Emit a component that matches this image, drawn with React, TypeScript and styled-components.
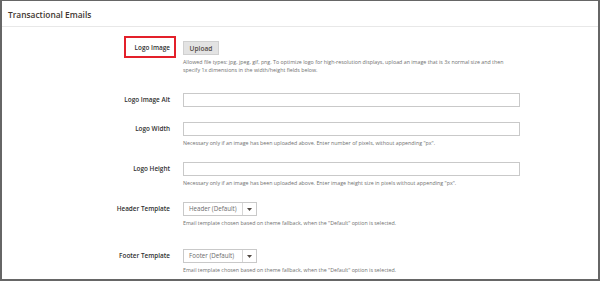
import React from "react";
import styled, { createGlobalStyle } from "styled-components";

const Global = createGlobalStyle`
  html, body { margin: 0; padding: 0; background: #ffffff; }
  body { font-family: "Open Sans", "Liberation Sans", sans-serif; }
  * { box-sizing: border-box; }
`;

const Frame = styled.div`
  width: 600px;
  height: 281px;
  border: 2px solid #666666;
  border-top-width: 1px;
  background: #ffffff;
  overflow: hidden;
`;

const Heading = styled.div`
  height: 26px;
  padding: 8px 0 0 6px;
  font-size: 8.4px;
  font-weight: 600;
  color: #41362f;
  border-bottom: 1px solid #e8e8e8;
`;

const Form = styled.div`
  display: flex;
  flex-direction: column;
  padding-top: 14px;
`;

const Row = styled.div<{ $mt: number }>`
  display: grid;
  grid-template-columns: 168px 337px;
  column-gap: 13px;
  margin-top: ${(p) => p.$mt}px;
`;

const LabelCell = styled.div`
  display: flex;
  justify-content: flex-end;
  align-items: flex-start;
  height: 14px;
`;

const Label = styled.div<{ $boxed?: boolean }>`
  font-size: 6.4px;
  font-weight: 600;
  color: #303030;
  line-height: 14px;
  white-space: nowrap;
  ${(p) =>
    p.$boxed
      ? `border: 2px solid #e3202a; margin: -5px -6px -3px 0; padding: 3px 4px 1px 9px;`
      : ``}
`;

const Control = styled.div`
  display: flex;
  flex-direction: column;
`;

const Button = styled.div`
  width: 36px;
  height: 14px;
  background: #e3e3e3;
  border: 1px solid #d0d0d0;
  color: #514943;
  font-size: 6.6px;
  font-weight: 600;
  display: flex;
  align-items: center;
  justify-content: center;
`;

const Input = styled.div`
  width: 337px;
  height: 14px;
  border: 1px solid #c9c9c9;
  background: #ffffff;
`;

const Select = styled.div`
  width: 74px;
  height: 14px;
  border: 1px solid #c9c9c9;
  display: flex;
  background: #ffffff;
`;

const SelectText = styled.div`
  flex: 1;
  font-size: 6.2px;
  color: #6a6a6a;
  line-height: 12px;
  padding-left: 5px;
  white-space: nowrap;
`;

const SelectArrow = styled.div`
  width: 14px;
  border-left: 1px solid #d6d6d6;
  display: flex;
  align-items: center;
  justify-content: center;
`;

const Help = styled.div`
  margin-top: 3px;
  font-size: 5.3px;
  line-height: 8px;
  color: #707070;
  white-space: nowrap;
`;

const Arrow = () => (
  <svg width="5" height="3" viewBox="0 0 5 3">
    <path d="M0 0 L5 0 L2.5 3 Z" fill="#514943" />
  </svg>
);

type RowDef = {
  label: string;
  mt: number;
  kind: "button" | "input" | "select";
  value?: string;
  help?: string[];
  boxed?: boolean;
};

const rows: RowDef[] = [
  {
    label: "Logo Image",
    mt: 0,
    kind: "button",
    boxed: true,
    help: [
      "Allowed file types: jpg, jpeg, gif, png. To optimize logo for high-resolution displays, upload an image that is 3x normal size and then",
      "specify 1x dimensions in the width/height fields below.",
    ],
  },
  { label: "Logo Image Alt", mt: 19, kind: "input" },
  {
    label: "Logo Width",
    mt: 15,
    kind: "input",
    help: ['Necessary only if an image has been uploaded above. Enter number of pixels, without appending "px".'],
  },
  {
    label: "Logo Height",
    mt: 15,
    kind: "input",
    help: ['Necessary only if an image has been uploaded above. Enter image height size in pixels without appending "px".'],
  },
  {
    label: "Header Template",
    mt: 15,
    kind: "select",
    value: "Header (Default)",
    help: ['Email template chosen based on theme fallback, when the "Default" option is selected.'],
  },
  {
    label: "Footer Template",
    mt: 22,
    kind: "select",
    value: "Footer (Default)",
    help: ['Email template chosen based on theme fallback, when the "Default" option is selected.'],
  },
];

export default function App() {
  return (
    <>
      <Global />
      <Frame>
        <Heading>Transactional Emails</Heading>
        <Form>
          {rows.map((r) => (
            <Row key={r.label} $mt={r.mt}>
              <LabelCell>
                <Label $boxed={r.boxed}>{r.label}</Label>
              </LabelCell>
              <Control>
                {r.kind === "button" && <Button>Upload</Button>}
                {r.kind === "input" && <Input />}
                {r.kind === "select" && (
                  <Select>
                    <SelectText>{r.value}</SelectText>
                    <SelectArrow>
                      <Arrow />
                    </SelectArrow>
                  </Select>
                )}
                {r.help && (
                  <Help>
                    {r.help.map((h) => (
                      <div key={h}>{h}</div>
                    ))}
                  </Help>
                )}
              </Control>
            </Row>
          ))}
        </Form>
      </Frame>
    </>
  );
}
